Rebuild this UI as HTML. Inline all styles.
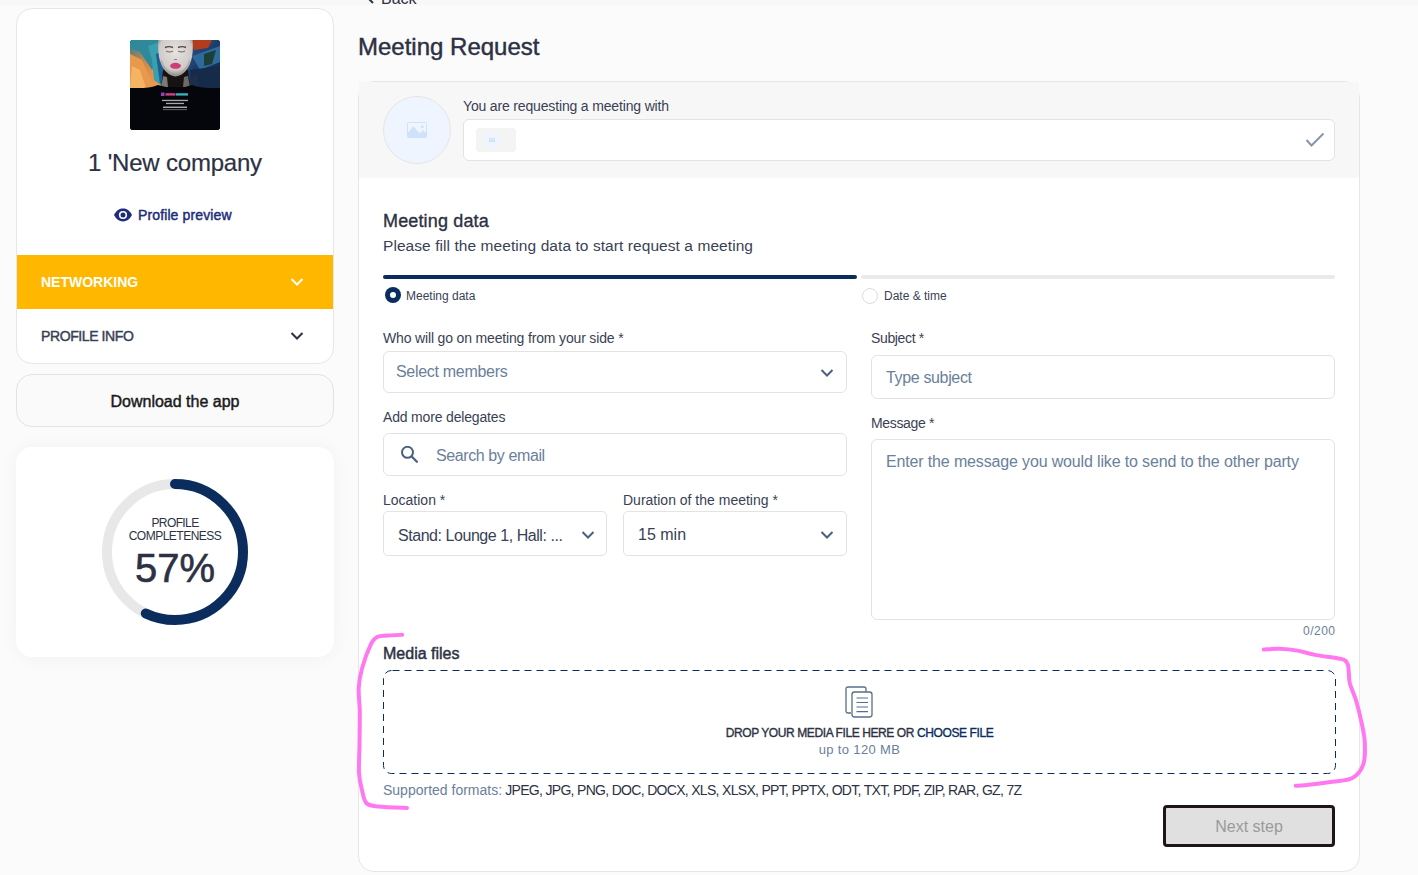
<!DOCTYPE html>
<html><head><meta charset="utf-8">
<style>
*{box-sizing:border-box;margin:0;padding:0}
html,body{width:1418px;height:875px;overflow:hidden;background:#fbfbfb;font-family:"Liberation Sans",sans-serif;color:#2d3143}
.a{position:absolute}
.t{position:absolute;white-space:nowrap;line-height:1}
.card{position:absolute;background:#fff;border:1px solid #e6e6e6;border-radius:16px}
.inp{position:absolute;background:#fff;border:1px solid #e3e3e3;border-radius:6px}
.lbl{font-size:14px;color:#3a3f55}
.ph{font-size:16px;color:#6b809b}
</style></head><body>

<div class="a" style="left:0;top:0;width:1418px;height:5px;background:#f8f8f8"></div>
<!-- LEFT COLUMN -->
<div class="card" style="left:16px;top:8px;width:318px;height:356px;overflow:hidden">
</div>
<div class="a" style="left:130px;top:40px;width:90px;height:90px;border-radius:3px;overflow:hidden">
<svg width="90" height="90" viewBox="0 0 90 90">
<defs>
<linearGradient id="lg1" x1="0" y1="0" x2="1" y2="1"><stop offset="0" stop-color="#2f7f8f"/><stop offset="0.45" stop-color="#d9894a"/><stop offset="1" stop-color="#f0a95a"/></linearGradient>
<linearGradient id="lg2" x1="0" y1="0" x2="1" y2="1"><stop offset="0" stop-color="#b8391c"/><stop offset="0.35" stop-color="#24477a"/><stop offset="1" stop-color="#0d1f38"/></linearGradient>
<radialGradient id="fg" cx="0.5" cy="0.35" r="0.6"><stop offset="0" stop-color="#e6e3e1"/><stop offset="0.8" stop-color="#cfcac8"/><stop offset="1" stop-color="#9c9593"/></radialGradient>
<filter id="bl"><feGaussianBlur stdDeviation="0.6"/></filter>
</defs>
<rect width="90" height="90" fill="#05060b"/>
<g filter="url(#bl)">
<rect x="0" y="0" width="45" height="48" fill="url(#lg1)"/>
<path d="M0 0 L28 0 L34 14 L22 30 L10 12 L0 8Z" fill="#2f8a9a"/>
<path d="M0 14 L12 20 L24 46 L0 48Z" fill="#e9994c"/>
<path d="M2 26 L10 30 L16 48 L0 48Z" fill="#f4b463"/>
<path d="M18 6 L30 2 L36 30 L32 46 L24 40 L22 20Z" fill="#3a9fb0"/>
<path d="M26 14 L34 10 L36 40 L30 44Z" fill="#1f5f8c"/>
<rect x="45" y="0" width="45" height="48" fill="url(#lg2)"/>
<path d="M60 0 L82 0 L78 8 L64 10Z" fill="#b13d1d"/>
<path d="M62 16 L90 6 L90 22 L70 30Z" fill="#2e6a9a"/>
<path d="M74 14 L86 10 L82 24 L74 26Z" fill="#1d3f37"/>
<path d="M60 30 L90 26 L90 48 L62 48Z" fill="#13294a"/>
<path d="M56 40 L68 34 L70 48 L58 48Z" fill="#1a2d48"/>
</g>
<path d="M33 30 L58 30 L60 48 L31 48Z" fill="#171212"/>
<path d="M33 36 L37 37 L38 47 L31 48Z" fill="#7f7875"/>
<path d="M58 36 L54 37 L53 47 L60 48Z" fill="#6e6866"/>
<path d="M0 48 Q18 49 28 45 L36 47 L55 47 L62 45 Q74 49 90 48 L90 90 L0 90Z" fill="#05060b"/>
<path d="M28.5 -1 L62.5 -1 C63.5 10 62.5 18 59.5 25 C56.5 31 52 36 45.5 36.5 C39 36 34.5 31 31.5 25 C28.5 18 27.5 10 28.5 -1Z" fill="url(#fg)"/>
<path d="M31 20 C33 26 36 30 40 33" stroke="#a49d9a" stroke-width="1.5" fill="none" opacity="0.6"/>
<path d="M60 20 C58 26 55 30 51 33" stroke="#a49d9a" stroke-width="1.5" fill="none" opacity="0.6"/>
<path d="M35 7.5 Q39 5.8 43 7.5" stroke="#4f4542" stroke-width="1.4" fill="none"/>
<path d="M48 7.5 Q52 5.8 56 7.5" stroke="#4f4542" stroke-width="1.4" fill="none"/>
<path d="M36 11 Q39.5 12.8 43 11 M48 11 Q51.5 12.8 55 11" stroke="#7d7370" stroke-width="1.1" fill="none"/>
<path d="M44 19.5 L47 19.5" stroke="#8a807d" stroke-width="1"/>
<ellipse cx="45.5" cy="25.8" rx="5.4" ry="3" fill="#cf3d78"/>
<rect x="31" y="52.5" width="3.5" height="3.5" fill="#9a3fb5"/>
<rect x="35.5" y="53.2" width="10" height="2.4" fill="#d13f8c"/>
<rect x="46" y="53.2" width="12" height="2.4" fill="#3ab0b8"/>
<rect x="32" y="59.8" width="26" height="1.3" fill="#a9a9a9"/>
<rect x="36" y="62.8" width="18" height="1.3" fill="#a9a9a9"/>
<rect x="33" y="66.6" width="24" height="1.3" fill="#bdbdbd"/>
<rect x="33" y="69.2" width="24" height="0.9" fill="#6d6d6d"/>
</svg>
</div>
<div class="t" id="company" style="letter-spacing:-0.2px;-webkit-text-stroke:0.2px #2d3143;left:0;width:350px;text-align:center;top:150.7px;font-size:24px;color:#2d3143">1 'New company</div>
<svg class="a" style="left:114px;top:207.8px" width="18" height="14" viewBox="0 0 18 14">
<path d="M0 7 C2.5 2.3 5.5 0.6 9 0.6 S15.5 2.3 18 7 C15.5 11.7 12.5 13.4 9 13.4 S2.5 11.7 0 7Z" fill="#1e2c7a"/>
<circle cx="9" cy="7" r="4.1" fill="#fff"/><circle cx="9" cy="7" r="2.5" fill="#1e2c7a"/>
</svg>
<div class="t" id="pp" style="letter-spacing:0.12px;-webkit-text-stroke:0.45px;left:138px;top:208px;font-size:14px;font-weight:normal;color:#1e2c7a">Profile preview</div>

<div class="a" style="left:17px;top:255px;width:316px;height:54px;background:#ffb700"></div>
<div class="t" id="net" style="left:41px;top:275px;font-size:14px;font-weight:bold;color:#fff">NETWORKING</div>
<svg class="a" style="left:290px;top:277px" width="14" height="10" viewBox="0 0 14 10"><path d="M1.5 2 L7 7.5 L12.5 2" stroke="#fff" stroke-width="2" fill="none"/></svg>
<div class="t" id="pinfo" style="letter-spacing:-0.4px;-webkit-text-stroke:0.45px;left:41px;top:329px;font-size:14px;font-weight:normal;color:#3a3f55">PROFILE INFO</div>
<svg class="a" style="left:290px;top:331px" width="14" height="10" viewBox="0 0 14 10"><path d="M1.5 2 L7 7.5 L12.5 2" stroke="#2d3143" stroke-width="2" fill="none"/></svg>

<div class="a" style="left:16px;top:374px;width:318px;height:53px;border:1px solid #e3e3e3;border-radius:16px;background:#fafafa"></div>
<div class="t" id="dl" style="letter-spacing:0px;-webkit-text-stroke:0.45px;left:0;width:350px;text-align:center;top:393.5px;font-size:16px;font-weight:normal;color:#1a1a1a">Download the app</div>

<div class="a" style="left:16px;top:447px;width:318px;height:210px;background:#fff;border-radius:16px;box-shadow:0 1px 20px rgba(0,0,0,0.045)"></div>
<svg class="a" style="left:100px;top:477px" width="150" height="150" viewBox="0 0 150 150">
<circle cx="75" cy="75" r="68" stroke="#e8e8e8" stroke-width="10" fill="none"/>
<circle cx="75" cy="75" r="68" stroke="#0a2d5e" stroke-width="10" fill="none" stroke-linecap="round" stroke-dasharray="243.5 1000" transform="rotate(-90 75 75)"/>
</svg>
<div class="t" id="prof" style="letter-spacing:-0.6px;left:0;width:350px;text-align:center;top:517px;font-size:12px;color:#2d3143">PROFILE</div>
<div class="t" id="compl" style="letter-spacing:-0.5px;left:0;width:350px;text-align:center;top:530px;font-size:12px;color:#2d3143">COMPLETENESS</div>
<div class="t" id="pct" style="-webkit-text-stroke:0.6px #2d3143;left:0;width:350px;text-align:center;top:548px;font-size:40px;color:#2d3143">57%</div>

<!-- MAIN -->
<svg class="a" style="left:366px;top:-6.5px" width="10" height="10" viewBox="0 0 10 10"><path d="M7 1 L3 5 L7 9" stroke="#2d3143" stroke-width="2" fill="none"/></svg>
<div class="t" style="left:381px;top:-9.5px;font-size:16px;color:#2d3143">Back</div>
<div class="t" id="title" style="letter-spacing:0px;-webkit-text-stroke:0.45px;left:358px;top:35px;font-size:24px;font-weight:normal;color:#2d3143">Meeting Request</div>

<div class="card" style="left:358px;top:81px;width:1002px;height:791px"></div>
<div class="a" style="left:359px;top:82px;width:1000px;height:96px;background:#f7f7f7"></div>
<div class="a" style="left:383px;top:96px;width:68px;height:68px;border-radius:50%;background:#eef5ff;border:1px solid #e6e6e6"></div>
<svg class="a" style="left:407px;top:122px" width="20" height="16" viewBox="0 0 20 16">
<rect x="0.5" y="0.5" width="19" height="15" rx="0.8" fill="none" stroke="#cfe2fa" stroke-width="1"/>
<path d="M0.8 10.8 L6.5 4.3 L12.4 11.2 L16 8.2 L19.2 10.6 L19.2 15.2 L0.8 15.2Z" fill="#cfe2fa"/>
<circle cx="15.3" cy="4.7" r="1.5" fill="#cfe2fa"/>
</svg>
<div class="t lbl" id="req" style="letter-spacing:-0.16px;left:463px;top:99px">You are requesting a meeting with</div>
<div class="inp" style="left:463px;top:119px;width:872px;height:42px"></div>
<div class="a" style="left:476px;top:128px;width:40px;height:24px;background:#f4f4f4;border-radius:4px"></div>
<div class="a" style="left:484px;top:132px;width:16px;height:16px;border-radius:50%;background:#eef5ff"></div>
<svg class="a" style="left:489px;top:138px" width="6" height="4" viewBox="0 0 6 4"><rect width="6" height="4" fill="#cfe2fa"/><rect x="1" y="1" width="1.5" height="0.8" fill="#eef5ff"/><rect x="3.5" y="1" width="1.5" height="0.8" fill="#eef5ff"/></svg>
<svg class="a" style="left:1305px;top:132px" width="20" height="16" viewBox="0 0 20 16"><path d="M1.5 8 L6.5 13.5 L18.5 1.5" stroke="#8796ab" stroke-width="2" fill="none"/></svg>

<div class="t" id="md" style="letter-spacing:0.15px;-webkit-text-stroke:0.35px;left:383px;top:211.8px;font-size:18px;font-weight:normal;color:#2d3143">Meeting data</div>
<div class="t" id="sub" style="letter-spacing:0.07px;left:383px;top:237.5px;font-size:15.5px;color:#3a3f55">Please fill the meeting data to start request a meeting</div>

<div class="a" style="left:383px;top:275px;width:474px;height:4px;border-radius:2px;background:#0a2d5e"></div>
<div class="a" style="left:861px;top:275px;width:474px;height:4px;border-radius:2px;background:#eaeaea"></div>
<div class="a" style="left:385px;top:287px;width:16px;height:16px;border-radius:50%;background:#0a2d5e"></div>
<div class="a" style="left:390px;top:292px;width:6px;height:6px;border-radius:50%;background:#fff"></div>
<div class="t" id="r1" style="left:406px;top:290px;font-size:12px;color:#3a3f55">Meeting data</div>
<div class="a" style="left:862px;top:288px;width:16px;height:16px;border-radius:50%;background:#fff;border:1px solid #dcdcdc"></div>
<div class="t" id="r2" style="left:884px;top:290px;font-size:12px;color:#3a3f55">Date &amp; time</div>

<div class="t lbl" id="who" style="letter-spacing:-0.16px;left:383px;top:331px">Who will go on meeting from your side *</div>
<div class="inp" style="left:383px;top:351px;width:464px;height:42px"></div>
<div class="t ph" id="selm" style="letter-spacing:-0.3px;left:396px;top:364px">Select members</div>
<svg class="a" style="left:820px;top:367.5px" width="14" height="10" viewBox="0 0 14 10"><path d="M1.5 2 L7 7.5 L12.5 2" stroke="#4b6080" stroke-width="2" fill="none"/></svg>

<div class="t lbl" id="adm" style="letter-spacing:-0.17px;left:383px;top:410.3px">Add more delegates</div>
<div class="inp" style="left:383px;top:433px;width:464px;height:43px"></div>
<svg class="a" style="left:399px;top:446px" width="20" height="19" viewBox="0 0 20 19"><circle cx="8.5" cy="6.3" r="5.5" stroke="#4b6080" stroke-width="2" fill="none"/><path d="M13.2 11 L17.9 15.7" stroke="#4b6080" stroke-width="2.3" stroke-linecap="round"/></svg>
<div class="t ph" id="sbe" style="letter-spacing:-0.4px;left:436px;top:448px">Search by email</div>

<div class="t lbl" id="loc" style="left:383px;top:493px">Location *</div>
<div class="inp" style="left:383px;top:511px;width:224px;height:45px;border-radius:5px"></div>
<div class="t" id="stand" style="letter-spacing:-0.45px;left:398px;top:527.5px;font-size:16px;color:#3a3f55">Stand: Lounge 1, Hall: ...</div>
<svg class="a" style="left:580.5px;top:529.5px" width="14" height="10" viewBox="0 0 14 10"><path d="M1.5 2 L7 7.5 L12.5 2" stroke="#4b6080" stroke-width="2" fill="none"/></svg>

<div class="t lbl" id="dur" style="left:623px;top:493px">Duration of the meeting *</div>
<div class="inp" style="left:623px;top:511px;width:224px;height:45px;border-radius:5px"></div>
<div class="t" id="min" style="left:638px;top:527px;font-size:16px;color:#3a3f55">15 min</div>
<svg class="a" style="left:820px;top:529.5px" width="14" height="10" viewBox="0 0 14 10"><path d="M1.5 2 L7 7.5 L12.5 2" stroke="#4b6080" stroke-width="2" fill="none"/></svg>

<div class="t lbl" id="subj" style="letter-spacing:-0.35px;left:871px;top:331px">Subject *</div>
<div class="inp" style="left:871px;top:355px;width:464px;height:44px"></div>
<div class="t ph" id="tsub" style="letter-spacing:-0.35px;left:886px;top:370px">Type subject</div>

<div class="t lbl" id="msg" style="letter-spacing:-0.35px;left:871px;top:416px">Message *</div>
<div class="inp" style="left:871px;top:439px;width:464px;height:181px"></div>
<div class="t ph" id="ent" style="letter-spacing:-0.15px;left:886px;top:454px">Enter the message you would like to send to the other party</div>
<div class="t" id="cnt" style="letter-spacing:0.5px;left:1235.5px;width:100px;text-align:right;top:625px;font-size:12px;color:#6b809b">0/200</div>

<div class="t" id="mf" style="letter-spacing:0px;-webkit-text-stroke:0.45px;left:383px;top:646px;font-size:16px;font-weight:normal;color:#2d3143">Media files</div>
<svg class="a" style="left:383px;top:670px" width="953" height="104" viewBox="0 0 953 104">
<rect x="0.5" y="0.5" width="952" height="103" rx="8" ry="8" fill="none" stroke="#0a2d5e" stroke-width="1" stroke-dasharray="7 5" stroke-dashoffset="-1"/>
</svg>
<svg class="a" style="left:844px;top:686px" width="30" height="32" viewBox="0 0 30 32">
<path d="M7 27 L4 27 Q2 27 2 25 L2 3 Q2 1 4 1 L20 1 Q22 1 22 3 L22 6" stroke="#5a6e8a" stroke-width="1.3" fill="none"/>
<rect x="8" y="6" width="20" height="25" rx="2.5" stroke="#5a6e8a" stroke-width="1.3" fill="#fff"/>
<path d="M12.5 12 H24 M12.5 16.5 H24 M12.5 21 H24 M12.5 25.7 H24" stroke="#5a6e8a" stroke-width="1.2"/>
</svg>
<div class="t" id="drop" style="letter-spacing:-0.4px;-webkit-text-stroke:0.35px;left:383px;width:953px;text-align:center;top:727px;font-size:12px;font-weight:normal;color:#2d3143">DROP YOUR MEDIA FILE HERE OR <span style="color:#0a2d5e">CHOOSE FILE</span></div>
<div class="t" id="upto" style="letter-spacing:0.35px;left:383px;width:953px;text-align:center;top:743px;font-size:13px;color:#6b809b">up to 120 MB</div>
<div class="t" id="supp" style="letter-spacing:-0.69px;left:383px;top:783px;font-size:14px;color:#2d3143"><span style="color:#6b809b;letter-spacing:0">Supported formats:</span> JPEG, JPG, PNG, DOC, DOCX, XLS, XLSX, PPT, PPTX, ODT, TXT, PDF, ZIP, RAR, GZ, 7Z</div>

<div class="a" style="left:1163px;top:805px;width:172px;height:42px;background:#e0e0e0;border:3px solid #1e1517;border-radius:4px"></div>
<div class="t" id="next" style="left:1163px;width:172px;text-align:center;top:819px;font-size:16px;color:#9a9a9a">Next step</div>

<!-- annotations -->
<svg class="a" style="left:0;top:0;pointer-events:none" width="1418" height="875" viewBox="0 0 1418 875">
<path d="M402.2 634.8 C399.8 634.9 392.2 635.1 388.0 635.5 C383.8 635.9 380.1 635.5 377.2 637.0 C374.3 638.5 373.2 639.4 370.7 644.6 C368.2 649.9 364.0 661.3 362.0 668.5 C360.0 675.7 359.1 680.8 358.7 688.0 C358.3 695.2 359.7 702.5 359.8 712.0 C359.9 721.5 359.6 734.9 359.5 745.0 C359.4 755.1 358.6 765.3 359.0 772.8 C359.4 780.3 360.8 785.0 362.0 790.0 C363.2 795.0 363.6 800.2 366.3 803.0 C369.0 805.8 371.5 805.7 378.3 806.5 C385.1 807.3 402.2 807.8 407.0 808.0" stroke="#ff78f0" stroke-width="4" fill="none" stroke-linecap="round" stroke-linejoin="round"/>
<path d="M1263.7 649.5 C1266.3 649.4 1273.7 648.6 1279.3 648.8 C1284.9 649.0 1291.7 649.6 1297.5 650.6 C1303.3 651.6 1306.9 653.2 1314.0 654.6 C1321.1 656.0 1334.8 657.8 1340.0 658.8 C1345.2 659.8 1344.2 659.8 1345.5 660.8 C1346.8 661.8 1347.4 662.6 1348.0 665.0 C1348.6 667.4 1348.7 671.8 1349.0 675.0 C1349.3 678.2 1348.8 679.8 1350.0 684.0 C1351.2 688.2 1354.1 693.9 1356.0 700.3 C1357.9 706.7 1360.0 715.3 1361.5 722.3 C1363.0 729.3 1364.5 735.4 1364.8 742.4 C1365.1 749.4 1365.4 758.4 1363.3 764.3 C1361.2 770.2 1357.6 775.1 1352.4 778.0 C1347.2 780.9 1340.2 780.5 1332.3 781.7 C1324.4 782.9 1310.9 784.6 1304.8 785.3 C1298.7 786.0 1297.2 785.6 1295.7 785.7" stroke="#ff78f0" stroke-width="4" fill="none" stroke-linecap="round" stroke-linejoin="round"/>
</svg>
</body></html>
